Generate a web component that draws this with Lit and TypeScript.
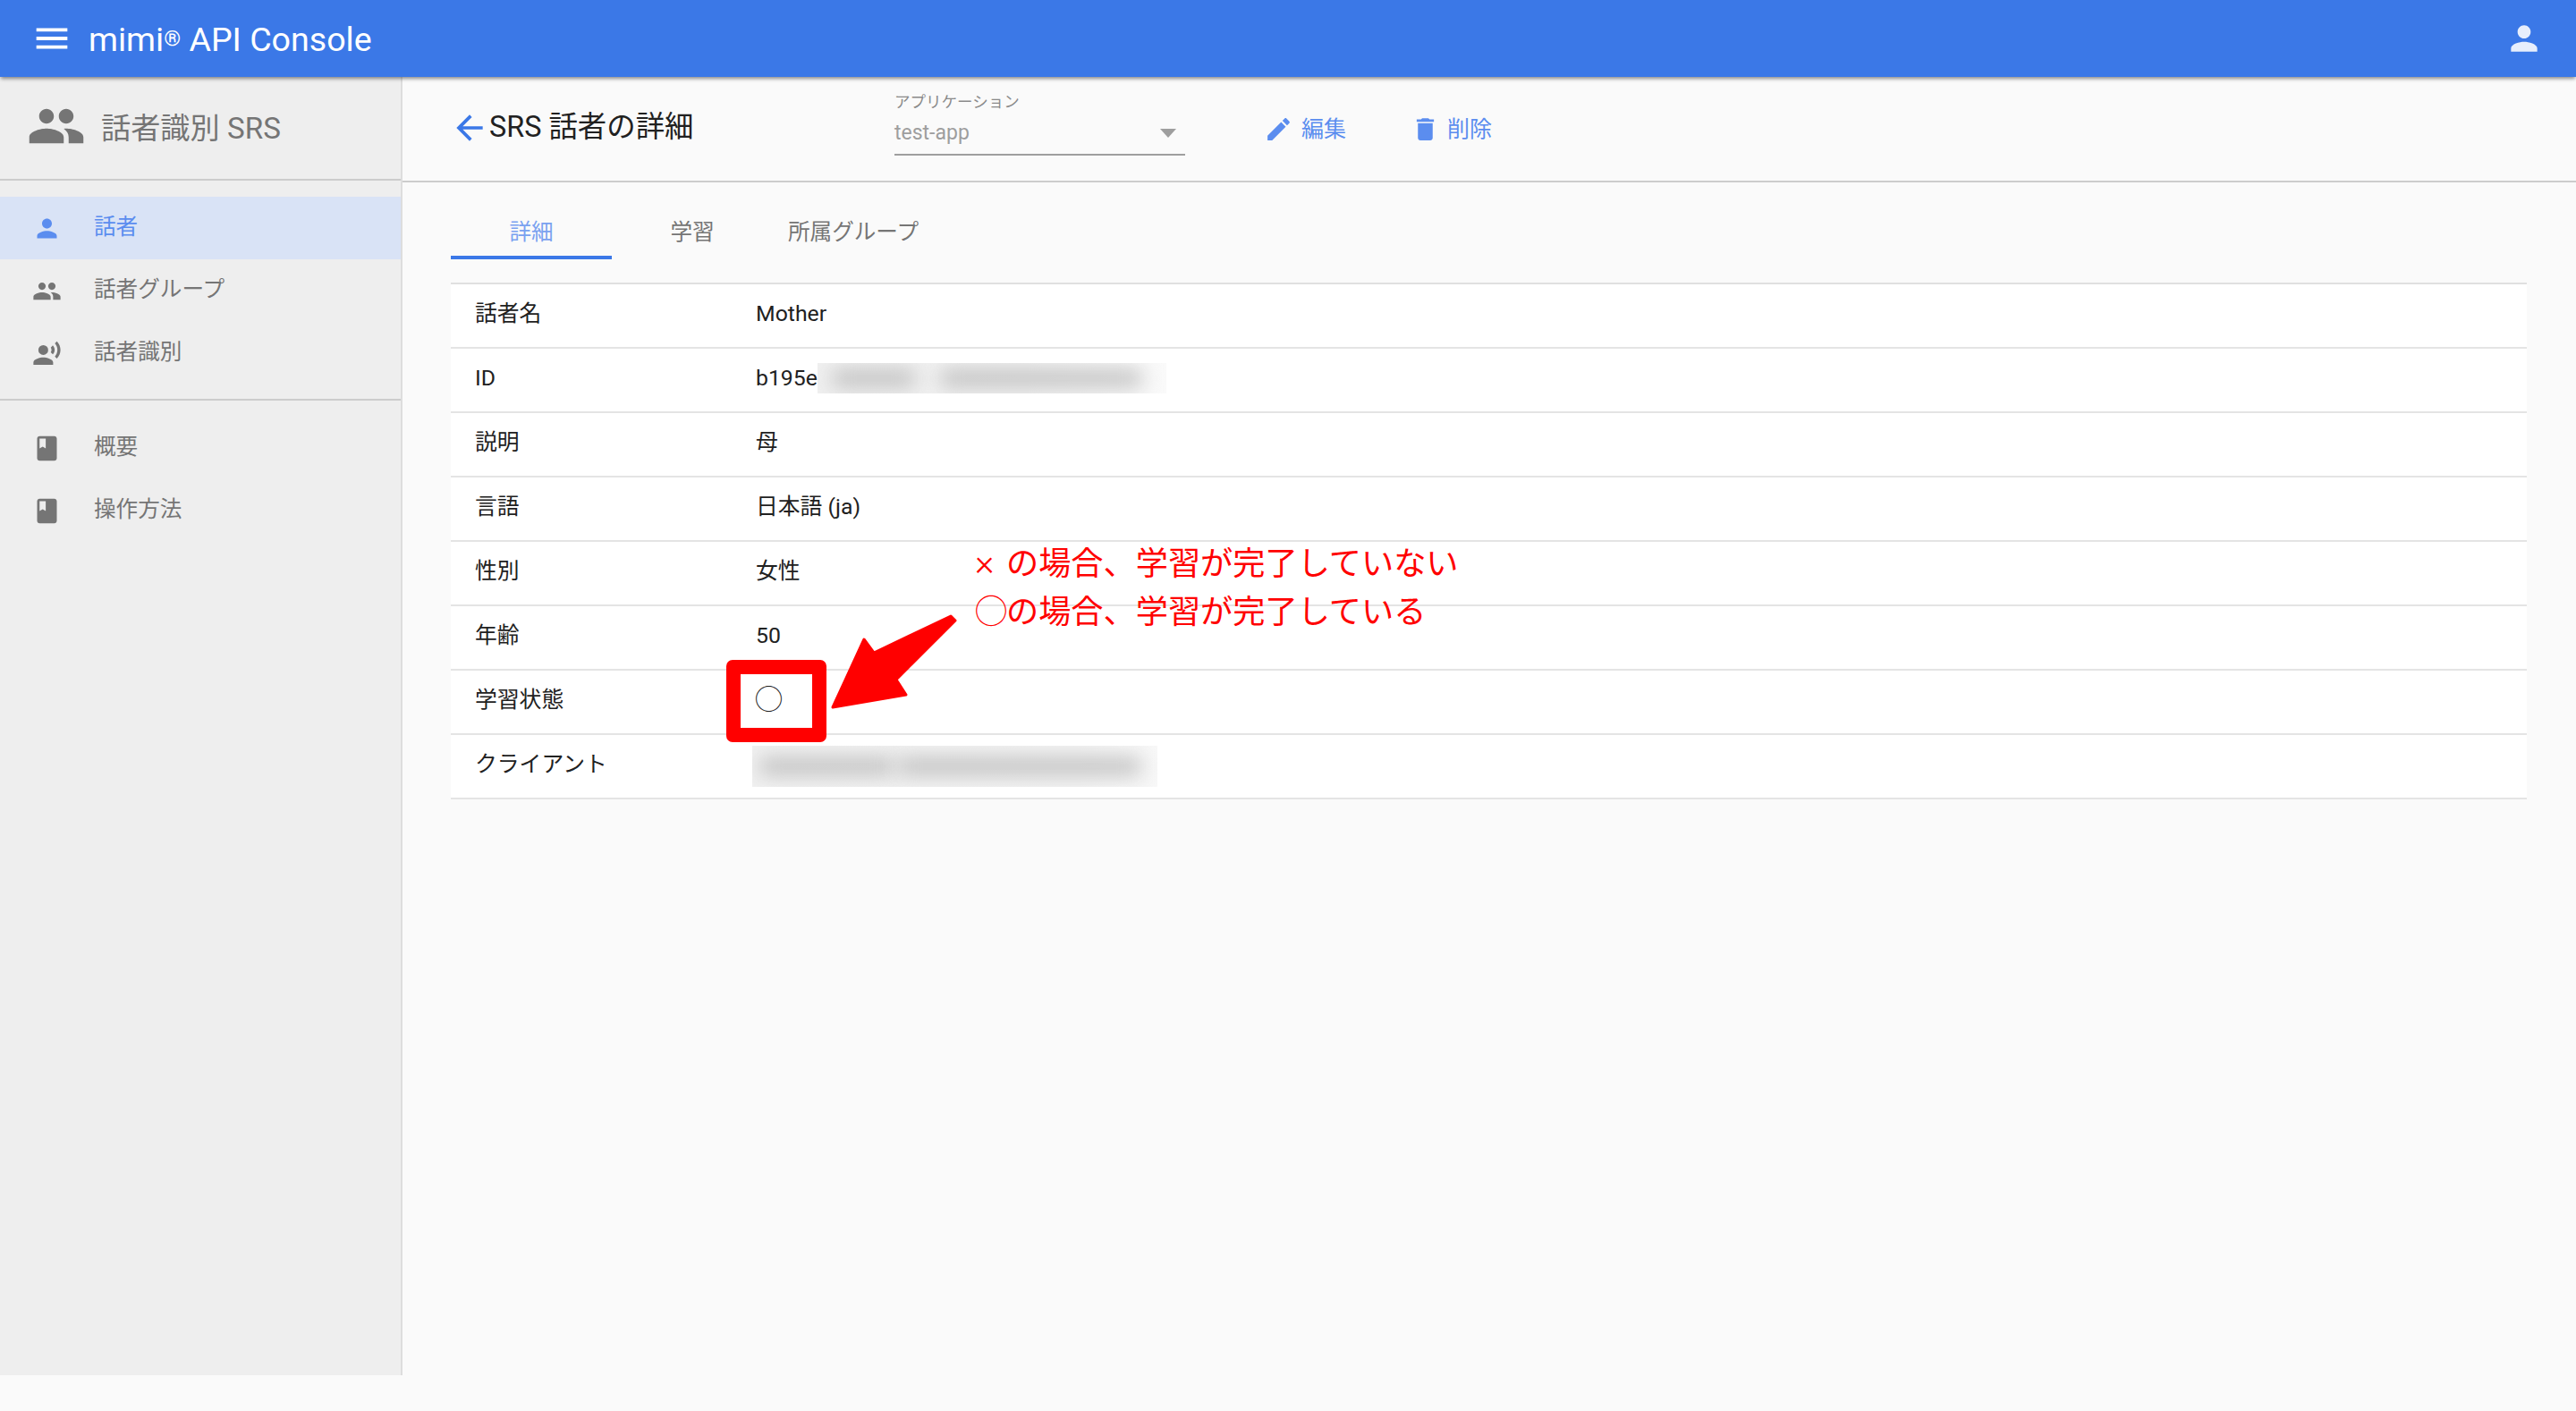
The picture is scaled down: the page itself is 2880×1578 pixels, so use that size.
import { LitElement, html, css, svg } from "lit";
import { customElement } from "lit/decorators.js";

const P = {
  person: "M12 12c2.21 0 4-1.79 4-4s-1.79-4-4-4-4 1.79-4 4 1.79 4 4 4zm0 2c-2.67 0-8 1.34-8 4v2h16v-2c0-2.66-5.33-4-8-4z",
  people: "M16 11c1.66 0 2.99-1.34 2.99-3S17.66 5 16 5c-1.66 0-3 1.34-3 3s1.34 3 3 3zm-8 0c1.66 0 2.99-1.34 2.99-3S9.66 5 8 5C6.34 5 5 6.34 5 8s1.34 3 3 3zm0 2c-2.33 0-7 1.17-7 3.5V19h14v-2.5c0-2.33-4.67-3.5-7-3.5zm8 0c-.29 0-.62.02-.97.05 1.16.84 1.97 1.97 1.97 3.45V19h6v-2.5c0-2.33-4.67-3.5-7-3.5z",
  voice: "M5 9a4 4 0 1 0 8 0a4 4 0 1 0-8 0zM9 15c-2.67 0-8 1.34-8 4v2h16v-2c0-2.66-5.33-4-8-4zm7.76-9.64l-1.68 1.69c.84 1.18.84 2.71 0 3.89l1.68 1.69c2.02-2.02 2.02-5.07 0-7.27zM20.07 2l-1.63 1.63c2.77 3.02 2.77 7.56 0 10.74L20.07 16c3.9-3.89 3.91-9.95 0-14z",
  book: "M18 2H6c-1.1 0-2 .9-2 2v16c0 1.1.9 2 2 2h12c1.1 0 2-.9 2-2V4c0-1.1-.9-2-2-2zM6 4h5v8l-2.5-1.5L6 12V4z",
  edit: "M3 17.25V21h3.75L17.81 9.94l-3.75-3.75L3 17.25zM20.71 7.04c.39-.39.39-1.02 0-1.41l-2.34-2.34c-.39-.39-1.02-.39-1.41 0l-1.83 1.83 3.75 3.75 1.83-1.83z",
  trash: "M6 19c0 1.1.9 2 2 2h8c1.1 0 2-.9 2-2V7H6v12zM19 4h-3.5l-1-1h-5l-1 1H5v2h14V4z",
  back: "M20 11H7.83l5.59-5.59L12 4l-8 8 8 8 1.41-1.41L7.83 13H20v-2z",
  menu: "M3 18h18v-2H3v2zm0-5h18v-2H3v2zm0-7v2h18V6H3z",
};

const icon = (d: string, cls: string) =>
  html`<svg class="ic ${cls}" viewBox="0 0 24 24" aria-hidden="true">${svg`<path d=${d}></path>`}</svg>`;

@customElement("app-root")
export class AppRoot extends LitElement {
  static styles = css`
    :host {
      display: flex;
      flex-direction: column;
      width: 100%;
      min-height: 1578px;
      background: #fafafa;
      font-family: Roboto, "Noto Sans CJK JP", sans-serif;
      font-size: 24.6px;
      color: #212121;
    }
    .ic { display: block; flex: none; fill: currentColor; }
    .s33 { width: 33px; height: 33px; }
    .s44 { width: 44px; height: 44px; }
    .s66 { width: 66px; height: 66px; }

    .appbar {
      height: 86px;
      flex: none;
      position: relative;
      z-index: 2;
      display: flex;
      align-items: center;
      padding: 0 36px;
      background: #3b78e7;
      color: #fff;
      box-shadow: 0 3px 4px -1px rgba(0, 0, 0, 0.45);
    }
    .appbar .menu { width: 44px; height: 44px; margin: 0 19px 0 0; transform: scale(1.05); }
    .brand { font-size: 37.6px; line-height: 86px; padding-top: 1px; }
    .brand sup { font-size: 24px; vertical-align: 6px; line-height: 0; }
    .appbar .acct { margin-left: auto; opacity: 0.88; }

    .body { display: flex; height: 1452px; flex: none; }
    .side {
      width: 450px;
      flex: none;
      box-sizing: border-box;
      background: #eee;
      border-right: 2px solid #ddd;
      color: #757575;
    }
    .side-head {
      height: 116px;
      box-sizing: border-box;
      display: flex;
      align-items: center;
      gap: 17px;
      padding: 0 0 6px 30px;
      border-bottom: 2px solid #ccc;
      font-size: 33.2px;
    }
    .side-head .ic { position: relative; top: 1px; }
    .nav { padding: 18px 0 16px; border-bottom: 2px solid #ccc; }
    .nav.last { border-bottom: 0; }
    .item {
      height: 70px;
      display: flex;
      align-items: center;
      gap: 36px;
      padding: 0 0 0 36px;
      line-height: 66px;
    }
    .item span { position: relative; top: -1px; }
    .item.on { background: #d9e3f6; color: #5b8def; }

    .main { flex: 1; min-width: 0; }
    .bar {
      height: 116px;
      display: flex;
      align-items: center;
      border-bottom: 2px solid #ccc;
      padding-left: 53px;
    }
    .bar .back { color: #3b78e7; position: relative; top: -1px; }
    .title { font-size: 32.4px; width: 453px; padding-bottom: 5px; line-height: 40px; }
    .select { width: 325px; height: 116px; box-sizing: border-box; padding-top: 18px; color: #9e9e9e; }
    .select .lab { font-size: 17.5px; line-height: 20px; color: #8a8a8a; }
    .select .val {
      margin-top: 3px;
      border-bottom: 2px solid #9e9e9e;
      display: flex;
      align-items: center;
      justify-content: space-between;
      padding: 0 10px 2px 0;
      font-size: 23px;
      line-height: 34px;
      height: 43px;
    }
    .caret { width: 0; height: 0; border: 9px solid transparent; border-top: 10px solid #9e9e9e; border-bottom: 0; }
    .act { display: flex; align-items: center; gap: 9px; color: #5b8def; line-height: 33px; }
    .act.e { margin-left: 88px; }
    .act.d { margin-left: 72px; gap: 8px; }
    .act span { font-size: 25px; }

    .content { padding: 16px 55px 0 54px; }
    .tabs { display: flex; height: 70px; margin-bottom: 26px; color: #757575; }
    .tab { width: 180px; box-sizing: border-box; display: flex; justify-content: center; padding-top: 22px; line-height: 36px; }
    .tab.on { color: #7aa2f0; border-bottom: 4px solid #3b78e7; }

    .table { position: relative; background: #fff; border-top: 2px solid #e0e0e0; font-size: 24.8px; }
    .row {
      display: grid;
      grid-template-columns: 314px 1fr;
      align-items: center;
      height: 72px;
      box-sizing: border-box;
      padding: 0 0 5px 27px;
      border-bottom: 2px solid #e4e4e4;
      line-height: 36px;
    }
    .id { display: flex; align-items: center; }
    .mask {
      display: flex;
      align-items: center;
      overflow: hidden;
      box-sizing: border-box;
    }
    .mask i { display: block; height: 18px; background: #bdbdbd; filter: blur(11px); }
    .mask.a {
      width: 390px; height: 34px; padding-left: 17px;
      background: linear-gradient(90deg, #f0f0f0, #f2f2f2 60%, #fafafa 100%);
    }
    .mask.a .p1 { width: 92px; }
    .mask.a .p2 { width: 224px; margin-left: 29px; }
    .mask.b {
      width: 453px; height: 46px; margin-left: -4px; padding-left: 9px;
      position: relative; top: 2px;
      background: linear-gradient(90deg, #f1f1f1, #f3f3f3 80%, #f8f8f8 100%);
    }
    .mask.b .p1 { width: 149px; }
    .mask.b .p2 { width: 270px; margin-left: 6px; }

    .mark {
      position: absolute;
      left: 308px;
      top: 420px;
      width: 112px;
      height: 92px;
      box-sizing: border-box;
      border: 16px solid #f00;
      border-radius: 7px;
    }
    .arrow { position: absolute; left: 0; top: 0; width: 1100px; height: 520px; pointer-events: none; overflow: visible; }
    .note {
      position: absolute;
      left: 586px;
      top: 286px;
      color: #f00;
      font-size: 36.2px;
      line-height: 54px;
      white-space: nowrap;
    }
    .note b { display: inline-block; width: 35px; font-weight: 400; }
    .note .x { font-size: 41px; line-height: 0; font-weight: 300; }
    .circle { display: block; font-size: 31px; line-height: 36px; color: #222; margin-left: -1px; }
  `;

  render() {
    const rows: [string, unknown][] = [
      ["話者名", "Mother"],
      ["ID", html`<div class="id">b195e<div class="mask a"><i class="p1"></i><i class="p2"></i></div></div>`],
      ["説明", "母"],
      ["言語", "日本語 (ja)"],
      ["性別", "女性"],
      ["年齢", "50"],
      ["学習状態", html`<span class="circle">◯</span>`],
      ["クライアント", html`<div class="mask b"><i class="p1"></i><i class="p2"></i></div>`],
    ];
    return html`
      <header class="appbar">
        ${icon(P.menu, "menu")}
        <div class="brand">mimi<sup>®</sup> API Console</div>
        ${icon(P.person, "s44 acct")}
      </header>
      <div class="body">
        <aside class="side">
          <div class="side-head">${icon(P.people, "s66")}<span>話者識別 SRS</span></div>
          <nav class="nav">
            <div class="item on">${icon(P.person, "s33")}<span>話者</span></div>
            <div class="item">${icon(P.people, "s33")}<span>話者グループ</span></div>
            <div class="item">${icon(P.voice, "s33")}<span>話者識別</span></div>
          </nav>
          <nav class="nav last">
            <div class="item">${icon(P.book, "s33")}<span>概要</span></div>
            <div class="item">${icon(P.book, "s33")}<span>操作方法</span></div>
          </nav>
        </aside>
        <main class="main">
          <div class="bar">
            ${icon(P.back, "s44 back")}
            <div class="title">SRS 話者の詳細</div>
            <div class="select">
              <div class="lab">アプリケーション</div>
              <div class="val"><span>test-app</span><span class="caret"></span></div>
            </div>
            <div class="act e">${icon(P.edit, "s33")}<span>編集</span></div>
            <div class="act d">${icon(P.trash, "s33")}<span>削除</span></div>
          </div>
          <div class="content">
            <div class="tabs">
              <div class="tab on">詳細</div>
              <div class="tab">学習</div>
              <div class="tab">所属グループ</div>
            </div>
            <div class="table">
              ${rows.map(([k, v]) => html`<div class="row"><div class="k">${k}</div><div>${v}</div></div>`)}
              <div class="mark"></div>
              <svg class="arrow" viewBox="0 0 1100 520" aria-hidden="true">
                <polygon points="427,473 462,397 473,412 559,371 564,376 498,442 509,459" fill="#f00" stroke="#f00" stroke-width="3" stroke-linejoin="round"></polygon>
              </svg>
              <div class="note"><b class="x">×</b>の場合、学習が完了していない<br /><b>◯</b>の場合、学習が完了している</div>
            </div>
          </div>
        </main>
      </div>
    `;
  }
}
